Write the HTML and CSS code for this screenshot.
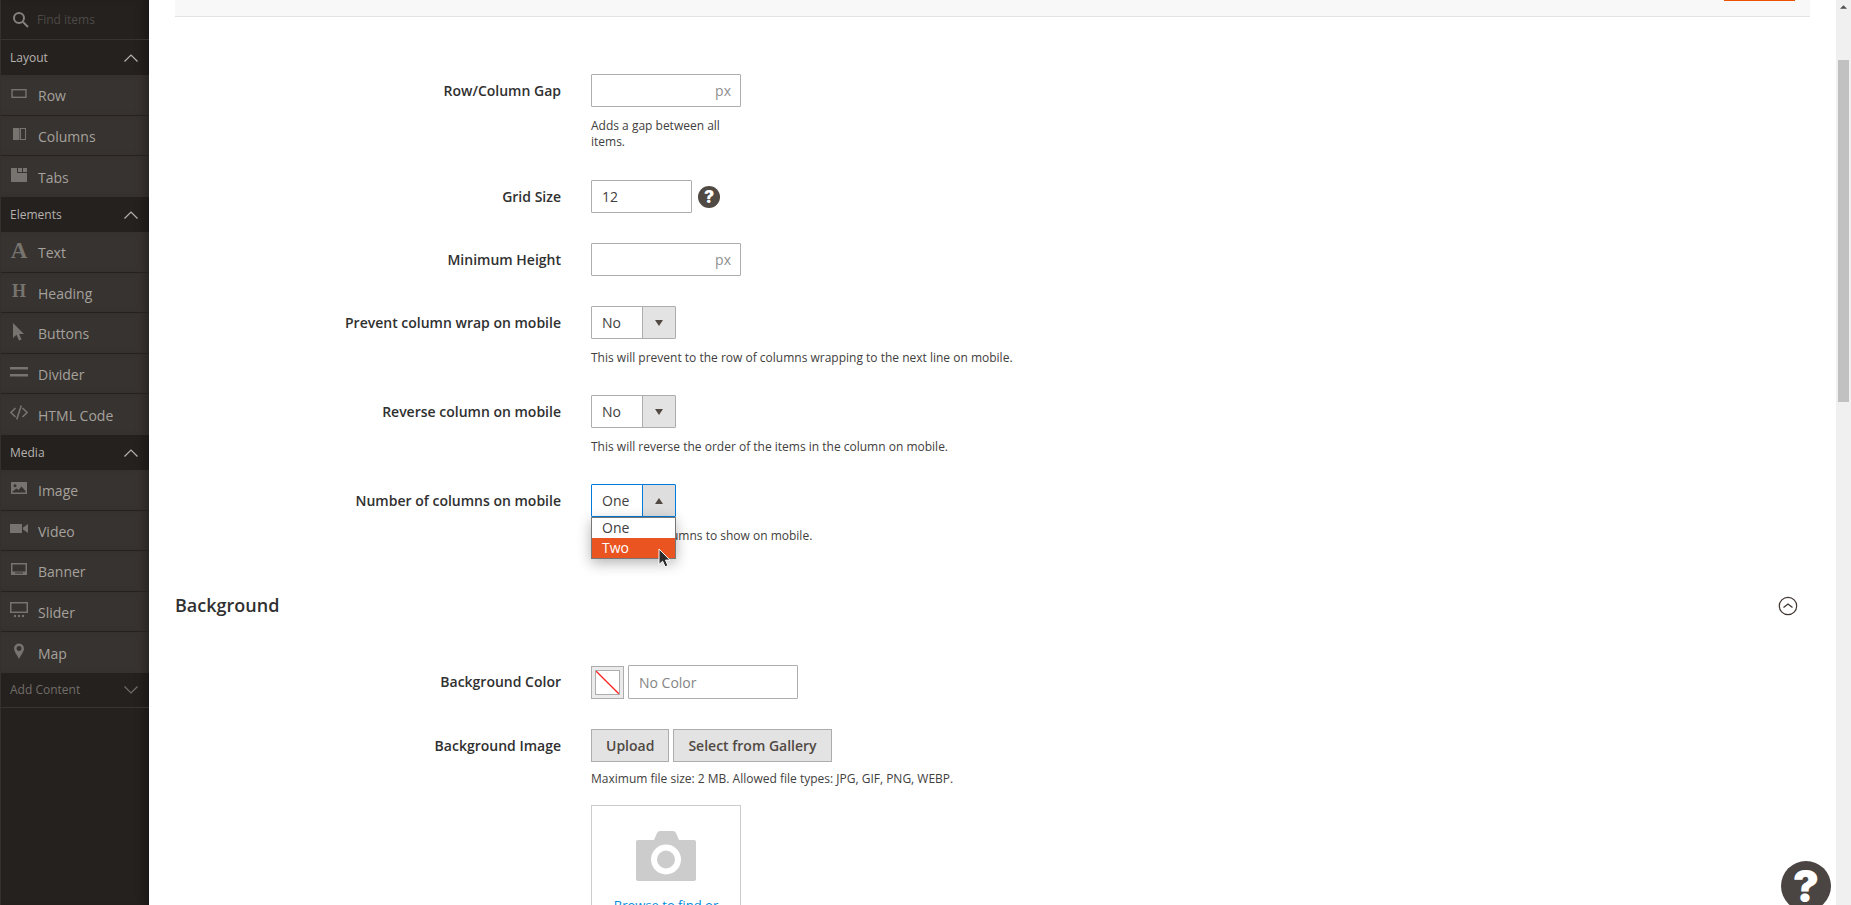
FILE: index.html
```html
<!DOCTYPE html>
<html lang="en">
<head>
<meta charset="utf-8">
<title>Edit Columns</title>
<link rel="stylesheet" href="styles.css">
</head>
<body>
<aside class="panel">
  <label class="search">
    <svg width="18" height="18" viewBox="0 0 18 18" fill="none" stroke="currentColor"><circle cx="7" cy="7" r="5" stroke-width="2"/><path d="M11 11l5 5" stroke-width="2"/></svg>
    <input class="search-input" type="search" placeholder="Find items" aria-label="Find items">
  </label>

  <button class="group-title" type="button">Layout
    <svg class="chevron" viewBox="0 0 14 8"><path d="M0.500 7.500L7 1l6.500 6.500"/></svg></button>
  <ul class="group">
    <li class="item"><svg class="icon" viewBox="0 0 18 18"><rect x="2" y="4.700" width="14" height="7.600" fill="none" stroke="currentColor" stroke-width="1.400"/></svg>Row</li>
    <li class="item"><svg class="icon" viewBox="0 0 18 18"><path fill="currentColor" d="M3 3h6.500v12H3z"/><rect x="10.500" y="3.500" width="5" height="11" fill="none" stroke="currentColor"/></svg>Columns</li>
    <li class="item"><svg class="icon" viewBox="0 0 18 18" fill="currentColor"><path d="M1 2h6v5h10v9H1zM8 2h4v4H8zM13 2h4v4h-4z"/></svg>Tabs</li>
  </ul>

  <button class="group-title" type="button">Elements
    <svg class="chevron" viewBox="0 0 14 8"><path d="M0.500 7.500L7 1l6.500 6.500"/></svg></button>
  <ul class="group">
    <li class="item"><span class="icon glyph glyph-large" aria-hidden="true">A</span>Text</li>
    <li class="item"><span class="icon glyph" aria-hidden="true">H</span>Heading</li>
    <li class="item"><svg class="icon" viewBox="0 0 18 18" fill="currentColor"><path d="M3 0v15l3.500-3.300L9 17.500l2.600-1L9.200 11H14z"/></svg>Buttons</li>
    <li class="item"><svg class="icon" viewBox="0 0 18 18" fill="currentColor"><path d="M0 4h18v2.500H0zM0 11h18v2.500H0z"/></svg>Divider</li>
    <li class="item"><svg class="icon" viewBox="0 0 18 18" fill="none" stroke="currentColor" stroke-width="1.600"><path d="M5.500 4L1 8.500 5.500 13M12.500 4L17 8.500 12.500 13M11.300 1.500l-4.600 14"/></svg>HTML Code</li>
  </ul>

  <button class="group-title" type="button">Media
    <svg class="chevron" viewBox="0 0 14 8"><path d="M0.500 7.500L7 1l6.500 6.500"/></svg></button>
  <ul class="group">
    <li class="item"><svg class="icon" viewBox="0 0 18 18" fill="currentColor" fill-rule="evenodd"><path d="M1 2h16v12H1zM2.500 12.500h13V11L11.500 6.500 8.500 10 6.500 8.500 2.500 11.500zM5 4.200a1.500 1.500 0 1 0 .1 0z"/></svg>Image</li>
    <li class="item"><svg class="icon" viewBox="0 0 18 18" fill="currentColor"><path d="M0 4h12v9H0zM18 4v9l-5-3.500v-2z"/></svg>Video</li>
    <li class="item"><svg class="icon" viewBox="0 0 18 18" fill="currentColor" fill-rule="evenodd"><path d="M1 2h16v12H1zM2.500 3.500v7h13v-7zM5 11.500h8v1H5z"/></svg>Banner</li>
    <li class="item"><svg class="icon" viewBox="0 0 18 18" fill="currentColor"><path fill-rule="evenodd" d="M0 1h18v11H0zM1.500 2.500v8h15v-8z"/><circle cx="5" cy="15" r="1.200"/><circle cx="9" cy="15" r="1.200"/><circle cx="13" cy="15" r="1.200"/></svg>Slider</li>
    <li class="item"><svg class="icon" viewBox="0 0 18 18" fill="currentColor" fill-rule="evenodd"><path d="M9 1.500a5 5 0 0 1 5 5c0 3-3 6.500-5 10.500-2-4-5-7.500-5-10.500a5 5 0 0 1 5-5zM9 4a2.500 2.500 0 1 0 .1 0z"/></svg>Map</li>
  </ul>

  <button class="group-title group-closed" type="button">Add Content
    <svg class="chevron" viewBox="0 0 14 8"><path d="M0.500 0.500L7 7l6.500-6.500"/></svg></button>
</aside>

<main class="main">
  <header class="toolbar"><button class="save" type="button" aria-label="Save"></button></header>

  <form class="form">
    <section class="fields">
      <div class="field">
        <label class="label" for="gap">Row/Column Gap</label>
        <div class="control narrow">
          <div class="unit-box"><input class="unit-input" id="gap" type="text"><span class="unit">px</span></div>
          <p class="note">Adds a gap between all items.</p>
        </div>
      </div>
      <div class="field">
        <label class="label" for="grid">Grid Size</label>
        <div class="control inline">
          <input class="text grid-size" id="grid" type="text" value="12">
          <button class="tip" type="button" aria-label="What is this?">?</button>
        </div>
      </div>
      <div class="field">
        <label class="label" for="height">Minimum Height</label>
        <div class="control narrow">
          <div class="unit-box"><input class="unit-input" id="height" type="text"><span class="unit">px</span></div>
        </div>
      </div>
      <div class="field">
        <label class="label" for="wrap">Prevent column wrap on mobile</label>
        <div class="control">
          <div class="select-box"><select class="select" id="wrap"><option>No</option><option>Yes</option></select><svg class="arrow" viewBox="0 0 8 6"><path d="M0 0h8L4 6z"/></svg></div>
          <p class="note">This will prevent to the row of columns wrapping to the next line on mobile.</p>
        </div>
      </div>
      <div class="field">
        <label class="label" for="reverse">Reverse column on mobile</label>
        <div class="control">
          <div class="select-box"><select class="select" id="reverse"><option>No</option><option>Yes</option></select><svg class="arrow" viewBox="0 0 8 6"><path d="M0 0h8L4 6z"/></svg></div>
          <p class="note">This will reverse the order of the items in the column on mobile.</p>
        </div>
      </div>
      <div class="field">
        <label class="label" for="count">Number of columns on mobile</label>
        <div class="control">
          <div class="select-box open"><select class="select" id="count"><option>One</option><option>Two</option></select><svg class="arrow" viewBox="0 0 8 6"><path d="M0 6h8L4 0z"/></svg>
            <ul class="options">
              <li class="option">One</li>
              <li class="option active">Two</li>
            </ul>
            <svg class="pointer" viewBox="0 0 13 20"><path d="M1 1v15.500l3.600-3.300 2.500 5.600 2.800-1.200-2.400-5.500H12z" fill="#2b2b2b" stroke="#fff"/></svg>
          </div>
          <p class="note">Number of columns to show on mobile.</p>
        </div>
      </div>
    </section>

    <div class="section-head">
      <h2 class="section-title">Background</h2>
      <button class="collapse" type="button" aria-label="Collapse"><svg width="20" height="20" viewBox="0 0 20 20" fill="none" stroke="currentColor"><circle cx="10" cy="10" r="8.700" stroke-width="1.200"/><path d="M5.500 11.500L10 8l4.500 3.500" stroke-width="1.300"/></svg></button>
    </div>

    <section class="fields">
      <div class="field">
        <label class="label" for="color">Background Color</label>
        <div class="control color">
          <button class="swatch" type="button" aria-label="Pick a color"><svg class="swatch-none" viewBox="0 0 23 23"><path d="M0 0l23 23" stroke="#f22" stroke-width="1.300"/></svg></button>
          <input class="text color-input" id="color" type="text" placeholder="No Color">
        </div>
      </div>
      <div class="field">
        <span class="label">Background Image</span>
        <div class="control">
          <div class="buttons">
            <button class="button" type="button">Upload</button>
            <button class="button" type="button">Select from Gallery</button>
          </div>
          <p class="limits">Maximum file size: 2 MB. Allowed file types: JPG, GIF, PNG, WEBP.</p>
          <div class="drop">
            <svg class="camera" width="62" height="50" viewBox="0 0 62 50"><path fill="#ccc" d="M3 9h16l3-7q1-2 3-2h13q2 0 3 2l3 7h15q2 0 2 2v37q0 2-2 2H3q-2 0-2-2V11q0-2 2-2z"/><circle cx="31" cy="28.500" r="12" fill="#ccc" stroke="#fff" stroke-width="6"/></svg>
            <a class="browse" href="#browse">Browse to find or drag image here</a>
          </div>
        </div>
      </div>
    </section>
  </form>
  <button class="help" type="button" aria-label="Help">?</button>
</main>

<div class="scrollbar" aria-hidden="true">
  <svg width="7" height="4" viewBox="0 0 8 4"><path d="M0 4h8L4 0z" fill="#505050"/></svg>
  <div class="thumb"></div>
</div>
</body>
</html>
```
FILE: styles.css
```css
* { box-sizing: border-box; }

body {
  display: flex;
  height: 100vh;
  margin: 0;
  overflow: hidden;
  background: #fff;
  color: #41403e;
  font: 14px/20px "Open Sans", "Noto Sans", sans-serif;
}

button, input, select { font: inherit; color: inherit; }
button { cursor: pointer; }
ul, p, h2 { margin: 0; padding: 0; list-style: none; }

/* Side panel */
.panel {
  flex: none;
  width: 149px;
  border-left: 1px solid #34302e;
  background: #25211e;
  box-shadow: inset -10px 0 10px -6px #1a1716;
  color: #a5a19c;
}

.search {
  display: flex;
  align-items: center;
  gap: 7px;
  height: 40px;
  padding: 0 11px;
  border-bottom: 1px solid #373330;
  color: #85817c;
}

.search svg { flex: none; }

.search-input {
  width: 100%;
  padding: 0;
  border: 0;
  background: none;
  font-size: 12px;
  outline: 0;
}

.search-input::placeholder { color: #4c4946; }

.group-title {
  display: flex;
  align-items: center;
  justify-content: space-between;
  width: 100%;
  height: 35px;
  padding: 0 11px 0 9px;
  border: 0;
  background: none;
  color: #b5b2af;
  font-size: 12px;
}

.group-closed {
  border-bottom: 1px solid #373330;
  color: #716d69;
}

.chevron {
  width: 14px;
  height: 8px;
  fill: none;
  stroke: currentColor;
  stroke-width: 1.200;
}

.item {
  display: flex;
  align-items: center;
  gap: 10px;
  height: 40px;
  padding: 2px 9px 0;
  border-bottom: 1px solid #25211e;
  background: #373330;
  box-shadow: inset -10px 0 10px -6px #282422;
}

.item:nth-child(odd) { height: 41px; }
.item:last-child { border-bottom: 0; }

.icon {
  flex: none;
  width: 18px;
  height: 18px;
  margin-bottom: 5px;
  color: #77736e;
}

.glyph {
  font: bold 18px/18px "Liberation Serif", serif;
  text-align: center;
}

.glyph-large { font-size: 23px; }

/* Main column */
.main {
  position: relative;
  flex: 1;
  min-width: 0;
  padding: 0 26px;
}

.toolbar {
  display: flex;
  align-items: flex-start;
  justify-content: flex-end;
  height: 17px;
  padding-right: 15px;
  border-bottom: 1px solid #e3e3e3;
  background: #f8f8f8;
}

.save {
  width: 71px;
  height: 1px;
  padding: 0;
  border: 0;
  background: #eb5202;
}

.form { padding-top: 57px; }

.fields {
  display: flex;
  flex-direction: column;
  gap: 30px;
}

.field {
  display: grid;
  grid-template-columns: 386px 1fr;
  column-gap: 30px;
}

.label {
  padding-top: 7px;
  color: #303030;
  font-weight: 600;
  text-align: right;
}

.narrow { width: 150px; }
.inline { display: flex; align-items: center; gap: 6px; }
.color { display: flex; align-items: flex-end; gap: 4px; }
.buttons { display: flex; gap: 4px; }

.text, .unit-box, .select {
  height: 33px;
  border: 1px solid #adadad;
  border-radius: 1px;
  background: #fff;
  outline: 0;
}

.text { padding: 0 10px; }
.text::placeholder { color: #858585; }
.grid-size { width: 101px; }
.color-input { width: 170px; height: 34px; }

.unit-box {
  display: flex;
  align-items: center;
  padding: 0 9px;
}

.unit-input {
  flex: 1;
  min-width: 0;
  border: 0;
  outline: 0;
}

.unit { color: #8f8f8f; }

.note {
  padding-top: 11px;
  font-size: 12px;
  line-height: 16px;
}

.tip {
  width: 22px;
  height: 22px;
  padding: 0;
  border: 0;
  border-radius: 50%;
  background: #514943;
  color: #fff;
  font: 900 17px/22px Inter, sans-serif;
}

.select-box {
  position: relative;
  width: 85px;
}

.select-box + .note { margin-bottom: -1px; }

.select {
  display: block;
  width: 100%;
  padding: 0 34px 0 10px;
  appearance: none;
  background: linear-gradient(to right, #adadad 1px, #e3e3e3 1px) right / 33px 100% no-repeat #fff;
}

.open .select {
  border-color: #007bdb;
  background-image: linear-gradient(to right, #007bdb 1px, #dedede 1px);
}

.arrow {
  position: absolute;
  top: 14px;
  right: 13px;
  width: 8px;
  height: 6px;
  fill: #514943;
  pointer-events: none;
}

.options {
  position: absolute;
  top: 100%;
  left: 0;
  width: 100%;
  border: 1px solid #777;
  background: #fff;
  box-shadow: 0 4px 14px rgba(0, 0, 0, 0.3);
}

.option { padding: 0 10px; }
.active { background: #e95420; color: #fff; }

.pointer {
  position: absolute;
  top: 64px;
  left: 67px;
  width: 13px;
  height: 20px;
}

.section-head {
  display: flex;
  align-items: center;
  justify-content: space-between;
  padding: 50px 12px 47px 0;
}

.section-title {
  color: #303030;
  font-size: 18px;
  font-weight: 600;
  line-height: 25px;
}

.collapse {
  display: flex;
  padding: 0;
  border: 0;
  background: none;
  color: #41362f;
}

.swatch {
  width: 33px;
  height: 33px;
  padding: 3px;
  border: 1px solid #adadad;
  background: #ebebeb;
}

.swatch-none {
  display: block;
  width: 25px;
  height: 25px;
  border: 1px solid #adadad;
  background: #fff;
}

.button {
  height: 33px;
  padding: 0 14px;
  border: 1px solid #adadad;
  background: #e3e3e3;
  color: #514943;
  font-weight: 600;
}

.limits {
  margin: 8px 0 18px;
  font-size: 12px;
  line-height: 17px;
}

.drop {
  display: flex;
  flex-direction: column;
  align-items: center;
  gap: 14px;
  width: 150px;
  height: 150px;
  padding: 25px 20px;
  border: 1px solid #ccc;
}

.camera { flex: none; }

.browse {
  color: #008bdb;
  font-size: 13px;
  text-align: center;
  text-decoration: none;
}

.help {
  position: absolute;
  right: 5px;
  bottom: -6px;
  width: 50px;
  height: 50px;
  padding: 0;
  border: 0;
  border-radius: 50%;
  background: #4a4542;
  color: #fff;
  font: 900 44px/50px Inter, sans-serif;
}

.scrollbar {
  display: flex;
  flex: none;
  flex-direction: column;
  align-items: center;
  gap: 51px;
  width: 15px;
  padding-top: 5px;
  background: #f0f0f0;
}

.thumb {
  width: 11px;
  height: 38%;
  background: #c1c1c1;
}
```
